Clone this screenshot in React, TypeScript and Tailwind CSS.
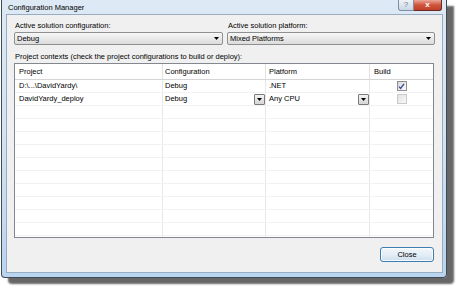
import { Fragment } from 'react';

type Row = { project: string; config: string; platform: string; build?: boolean; editable?: boolean };

const rows: Row[] = [
  { project: 'D:\\...\\DavidYardy\\', config: 'Debug', platform: '.NET', build: true },
  { project: 'DavidYardy_deploy', config: 'Debug', platform: 'Any CPU', build: false, editable: true },
  ...Array.from({ length: 11 }, () => ({ project: '', config: '', platform: '' })),
];

function Arrow() {
  return (
    <svg width="5" height="3" viewBox="0 0 5 3" className="block shrink-0">
      <path d="M0 0h5L2.5 3z" fill="#000" />
    </svg>
  );
}

function Combo({ value, width }: { value: string; width: string }) {
  return (
    <div
      className={`${width} mt-[1px] flex h-[13px] items-center justify-between rounded-[2px] border border-[#8e8f8f] bg-gradient-to-b from-[#f7f7f7] to-[#dcdcdc] pl-[2px] pr-[3px]`}
    >
      <span>{value}</span>
      <Arrow />
    </div>
  );
}

function CellButton() {
  return (
    <div className="flex h-[11px] w-[11px] shrink-0 items-center justify-center rounded-[1px] border border-[#7a7a7a] bg-gradient-to-b from-[#f4f4f4] to-[#d6d6d6]">
      <Arrow />
    </div>
  );
}

function CheckBox({ checked }: { checked?: boolean }) {
  if (checked) {
    return (
      <div className="flex h-[10px] w-[10px] items-center justify-center border border-[#8f8f8f] bg-gradient-to-br from-[#d8d8d8] to-[#fbfbfb]">
        <svg width="7" height="7" viewBox="0 0 7 7">
          <path d="M1 3.6l1.6 1.8L6 0.8" fill="none" stroke="#3a4f9a" strokeWidth="1.4" />
        </svg>
      </div>
    );
  }
  return <div className="h-[10px] w-[10px] border border-[#c9c9c9] bg-gradient-to-br from-[#e2e2e2] to-[#f8f8f8]" />;
}

export default function App() {
  return (
    <div className="h-[290px] w-[462px] overflow-hidden bg-white pl-[1px] font-['Liberation_Sans',Arial,sans-serif] text-[7.5px] leading-[10px] text-black">
      <div className="flex h-[278px] w-[446px] flex-col rounded-b-[4px] border-x border-b border-[#3f4a55] bg-gradient-to-b from-[#dde9f5] via-[#d2e3f2] to-[#b9d4ee] shadow-[7px_6px_2px_rgba(0,0,0,0.6)]">
        <div className="flex h-[14px] items-start">
          <span className="ml-[6px] pt-[3px] text-black">Configuration Manager</span>
          <div className="ml-auto mr-[4px] flex">
            <div className="flex h-[11px] w-[16px] items-center justify-center rounded-bl-[3px] border border-t-0 border-[#7e8fa3] bg-gradient-to-b from-[#eef3f8] to-[#c9d7e5] text-[8px] leading-none text-[#6b7785]">
              ?
            </div>
            <div className="flex h-[11px] w-[28px] items-center justify-center rounded-br-[3px] border border-l-0 border-t-0 border-[#6a2a1e] bg-gradient-to-b from-[#e9a596] via-[#d0543c] to-[#c04028] text-[8px] font-bold leading-none text-white">
              x
            </div>
          </div>
        </div>

        <div className="ml-[4px] flex h-[259px] w-[437px] flex-col border border-[#98adc2] bg-[#f0f0f0] pl-[7px] pr-[8px] pt-[6px]">
          <div className="flex gap-[4px]">
            <div className="flex flex-col">
              <span className="pl-[1px]">Active solution configuration:</span>
              <Combo value="Debug" width="w-[209px]" />
            </div>
            <div className="flex flex-col">
              <span className="pl-[1px]">Active solution platform:</span>
              <Combo value="Mixed Platforms" width="w-[208px]" />
            </div>
          </div>

          <span className="mt-[7px] pl-[1px]">Project contexts (check the project configurations to build or deploy):</span>

          <div className="mt-[1px] h-[175px] w-[420px] overflow-hidden border border-[#828790] bg-white">
            <div className="grid h-[16px] grid-cols-[148px_103px_104px_63px] border-b border-[#d5d5d5]">
              <div className="flex items-center border-r border-[#e2e2e2] pl-[4px]">Project</div>
              <div className="flex items-center border-r border-[#e2e2e2] pl-[2px]">Configuration</div>
              <div className="flex items-center border-r border-[#e2e2e2] pl-[3px]">Platform</div>
              <div className="flex items-center pl-[4px]">Build</div>
            </div>
            {rows.map((r, i) => (
              <Fragment key={i}>
                <div className="grid h-[13px] grid-cols-[148px_103px_104px_63px] border-b border-[#f2f2f2]">
                  <div className="flex items-center border-r border-[#e8e8e8] pl-[4px]">{r.project}</div>
                  <div className="flex items-center justify-between border-r border-[#e8e8e8] pl-[2px]">
                    <span>{r.config}</span>
                    {r.editable && <CellButton />}
                  </div>
                  <div className="flex items-center justify-between border-r border-[#e8e8e8] pl-[3px]">
                    <span>{r.platform}</span>
                    {r.editable && <CellButton />}
                  </div>
                  <div className="flex items-center justify-center">
                    {r.build !== undefined && <CheckBox checked={r.build} />}
                  </div>
                </div>
              </Fragment>
            ))}
          </div>

          <div className="mt-[9px] flex justify-end">
            <button className="flex h-[15px] w-[54px] items-center justify-center rounded-[3px] border border-[#3c7fb1] bg-gradient-to-b from-[#f2f7fb] via-[#e4eef6] to-[#cfdfec] shadow-[inset_0_0_0_1px_rgba(255,255,255,0.8)]">
              Close
            </button>
          </div>
        </div>
      </div>
    </div>
  );
}
